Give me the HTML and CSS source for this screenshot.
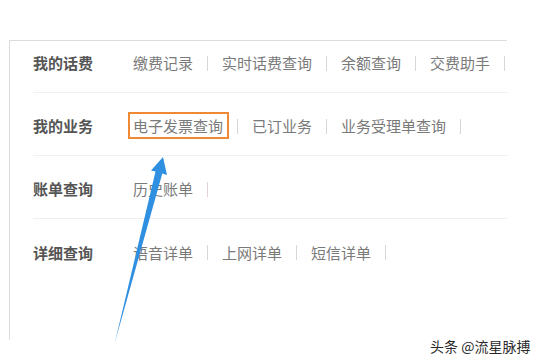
FILE: index.html
```html
<!DOCTYPE html>
<html lang="zh-CN">
<head>
<meta charset="utf-8">
<title>查询</title>
<link rel="stylesheet" href="styles.css">
</head>
<body>
<div class="panel">
  <div class="row">
    <div class="label">我的话费</div>
    <div class="links">
      <span class="link">缴费记录</span><span class="bar"></span>
      <span class="link">实时话费查询</span><span class="bar"></span>
      <span class="link">余额查询</span><span class="bar"></span>
      <span class="link">交费助手</span><span class="bar"></span>
    </div>
  </div>
  <div class="row">
    <div class="label">我的业务</div>
    <div class="links">
      <span class="link highlight">电子发票查询</span><span class="bar"></span>
      <span class="link">已订业务</span><span class="bar"></span>
      <span class="link">业务受理单查询</span><span class="bar"></span>
    </div>
  </div>
  <div class="row">
    <div class="label">账单查询</div>
    <div class="links">
      <span class="link">历史账单</span><span class="bar bar-pink"></span>
    </div>
  </div>
  <div class="row">
    <div class="label">详细查询</div>
    <div class="links">
      <span class="link">语音详单</span><span class="bar"></span>
      <span class="link">上网详单</span><span class="bar"></span>
      <span class="link">短信详单</span><span class="bar"></span>
    </div>
  </div>
</div>
<svg class="arrow" width="540" height="360" viewBox="0 0 540 360">
  <polygon points="163,157 167,175 162.3,173.4 115,342 155.5,171.6 151,170.4" fill="#2f8fe0"/>
</svg>
<div class="watermark">头条 @流星脉搏</div>
</body>
</html>
```
FILE: styles.css
```css
html, body {
  margin: 0;
  padding: 0;
  background: #ffffff;
}
body {
  width: 540px;
  height: 360px;
  overflow: hidden;
  position: relative;
  font-family: "Noto Sans CJK SC", "Noto Sans", sans-serif;
}
.panel {
  box-sizing: border-box;
  margin: 40px 0 0 9px;
  width: 498px;
  height: 300px;
  border-top: 1px solid #dcdcdc;
  border-left: 1px solid #dcdcdc;
  padding-left: 23px;
}
.row {
  display: flex;
  align-items: center;
  height: 63px;
  box-sizing: border-box;
  padding: 23px 0 19px;
  border-bottom: 1px solid #f0f0f0;
}
.row:first-child {
  height: 52px;
  padding-top: 12px;
}
.row:last-child {
  border-bottom: none;
}
.label {
  width: 100px;
  flex: none;
  font-size: 15px;
  line-height: 20px;
  font-weight: 700;
  color: #555555;
}
.links {
  display: flex;
  align-items: center;
}
.link {
  position: relative;
  font-size: 15px;
  line-height: 20px;
  color: #7a7a7a;
  white-space: nowrap;
}
.bar {
  width: 1px;
  height: 15px;
  margin: 0 14px;
  background: #d6d6d6;
}
.bar-pink {
  background: #e3d2d6;
}
.highlight::after {
  content: "";
  position: absolute;
  top: -4px;
  bottom: -3px;
  left: -5px;
  right: -6px;
  border: 2.5px solid #ef8934;
}
.arrow {
  position: absolute;
  top: 0;
  left: 0;
  pointer-events: none;
}
.watermark {
  position: absolute;
  left: 430px;
  top: 336px;
  font-size: 14px;
  line-height: 20px;
  color: #2a2a2a;
  white-space: nowrap;
  text-shadow: 0 0 1px #ffffff, 0 0 2px #ffffff;
}
```
